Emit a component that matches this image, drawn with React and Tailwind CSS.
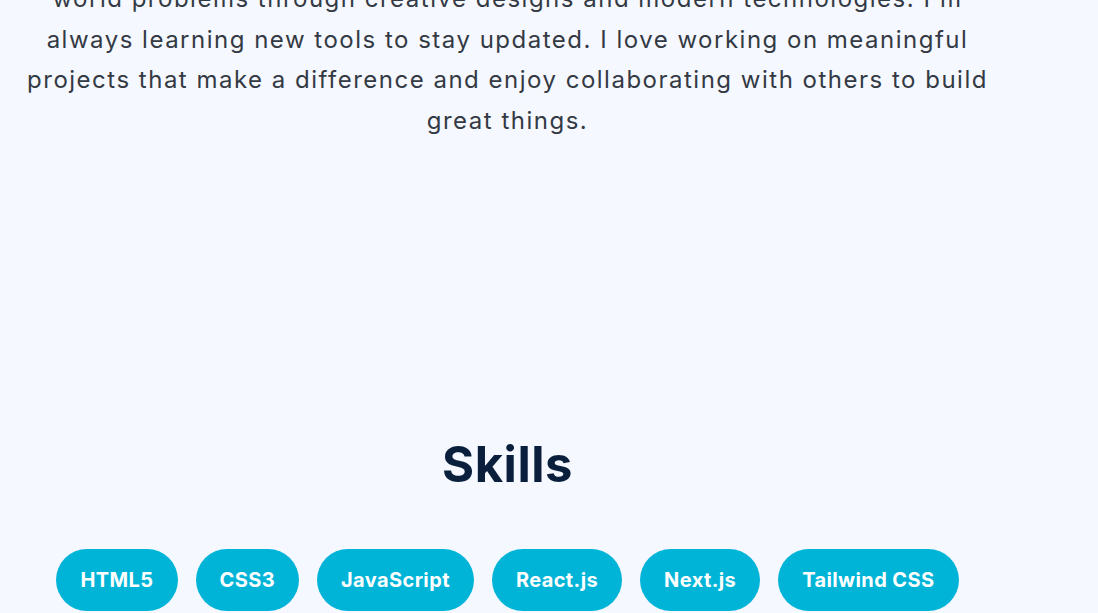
export default function App() {
  const skills = ["HTML5", "CSS3", "JavaScript", "React.js", "Next.js", "Tailwind CSS"];
  return (
    <div className="h-[613px] w-[1098px] overflow-hidden bg-[#f5f8ff]" style={{ fontFamily: "Inter, 'Noto Sans', sans-serif" }}>
      <div className="w-[1015px] flex flex-col items-center">
        <p className="-mt-[21px] whitespace-nowrap text-center text-[24px] leading-[40.5px] tracking-[1.5px] text-[#333a44]">
          world problems through creative designs and modern technologies. I'm<br />
          always learning new tools to stay updated. I love working on meaningful<br />
          projects that make a difference and enjoy collaborating with others to build<br />
          great things.
        </p>
        <h2 className="mt-[294px] text-[49px] leading-[60px] font-bold tracking-[0.5px] text-[#0a1f3c]">Skills</h2>
        <div className="mt-[54px] flex flex-wrap justify-center gap-[18px]">
          {skills.map((s) => (
            <span key={s} className="rounded-full bg-[#00b4d8] px-6 py-4 text-[20px] leading-[30px] font-bold tracking-[0.4px] text-white">
              {s}
            </span>
          ))}
        </div>
      </div>
    </div>
  );
}
